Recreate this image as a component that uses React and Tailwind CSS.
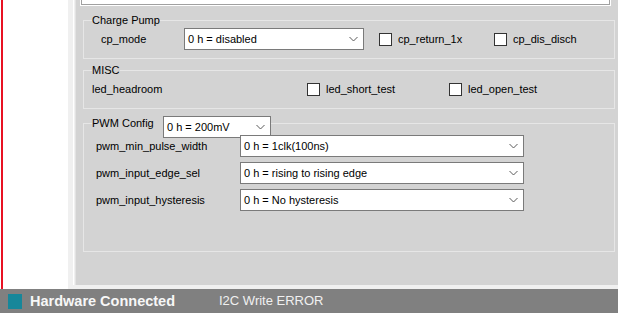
import React from 'react';

const font = { fontFamily: '"Liberation Sans", Arial, sans-serif' };

function Chevron() {
  return (
    <svg width="9" height="6" viewBox="0 0 9 6" className="shrink-0">
      <path d="M0.5 1 L4.5 5 L8.5 1" fill="none" stroke="#5a5a5a" strokeWidth="1" />
    </svg>
  );
}

function Combo({ value, className }) {
  return (
    <div className={`flex items-center justify-between bg-white border border-[#7a7a7a] pl-[3px] pr-[5px] ${className}`}>
      <span className="text-[11px] leading-[12px] text-black whitespace-nowrap">{value}</span>
      <Chevron />
    </div>
  );
}

function Check({ label, className }) {
  return (
    <div className={`flex items-center ${className}`}>
      <div className="w-[13px] h-[13px] bg-white border border-[#333333] shrink-0" />
      <span className="ml-[6px] text-[11px] leading-[12px] text-black whitespace-nowrap">{label}</span>
    </div>
  );
}

const pwmRows = [
  ['pwm_min_pulse_width', '0 h = 1clk(100ns)'],
  ['pwm_input_edge_sel', '0 h = rising to rising edge'],
  ['pwm_input_hysteresis', '0 h = No hysteresis'],
];

export default function App() {
  return (
    <div className="w-[618px] h-[313px] flex flex-col overflow-hidden bg-white" style={font}>
      <div className="flex h-[289px]">
        {/* left white column with red edge */}
        <div className="w-[67px] h-full ml-[1px] border-l-2 border-[#e81123] bg-white shrink-0" />
        {/* frame */}
        <div className="flex-1 bg-[#f0f0f0] pl-[5px] pb-[4px] flex">
          <div className="flex-1 border-l border-white">
            <div className="h-full ml-[1px] border-l border-[#e2e2e2] bg-[#d3d3d3] flex flex-col">
              {/* top box bottom edge */}
              <div className="ml-[4px] w-[531px] h-[6px] border-l border-r border-b border-white">
                <div className="h-[5px] bg-white border-l border-r border-b border-[#a0a0a0]" />
              </div>

              {/* Charge Pump */}
              <fieldset className="ml-[7px] w-[532px] mt-[8px] border border-[#e6e6e6] pb-[8px]">
                <legend className="ml-[8px] text-[11px] leading-[12px] text-black">Charge Pump</legend>
                <div className="flex items-center h-[22px] mt-[2px] pl-[17px]">
                  <span className="w-[83px] text-[11px] leading-[12px] text-black">cp_mode</span>
                  <Combo value="0 h = disabled" className="w-[180px] h-[22px]" />
                  <Check label="cp_return_1x" className="ml-[15px] w-[115px]" />
                  <Check label="cp_dis_disch" />
                </div>
              </fieldset>

              {/* MISC */}
              <fieldset className="ml-[7px] w-[532px] mt-[5px] border border-[#e6e6e6] pb-[8px]">
                <legend className="ml-[8px] text-[11px] leading-[12px] text-black">MISC</legend>
                <div className="flex items-center h-[22px] mt-[2px] pl-[8px]">
                  <span className="w-[215px] text-[11px] leading-[12px] text-black">led_headroom</span>
                  <Check label="led_short_test" className="w-[142px]" />
                  <Check label="led_open_test" />
                </div>
              </fieldset>

              {/* PWM Config */}
              <fieldset className="ml-[7px] w-[532px] mt-[7px] border border-[#e6e6e6] pb-[40px]">
                <legend className="ml-[8px] h-[14px] flex items-start">
                  <span className="w-[71px] text-[11px] leading-[14px] text-black">PWM Config</span>
                  <Combo value="0 h = 200mV" className="w-[108px] h-[22px] shrink-0" />
                </legend>
                <div className="flex flex-col gap-[5px] mt-[5px] pl-[12px]">
                  {pwmRows.map(([label, value]) => (
                    <div key={label} className="flex items-center h-[22px]">
                      <span className="w-[144px] text-[11px] leading-[12px] text-black">{label}</span>
                      <Combo value={value} className="w-[284px] h-[22px]" />
                    </div>
                  ))}
                </div>
              </fieldset>
            </div>
          </div>
        </div>
      </div>

      {/* status bar */}
      <div className="h-[24px] bg-[#808080] flex items-center">
        <div className="ml-[8px] w-[14px] h-[15px] bg-[#17879a]" />
        <span className="ml-[8px] w-[189px] text-[14.5px] leading-[16px] font-bold text-[#f7f7f7] whitespace-nowrap">Hardware Connected</span>
        <span className="text-[13px] leading-[16px] text-[#f0f0f0] whitespace-nowrap">I2C Write ERROR</span>
      </div>
    </div>
  );
}
